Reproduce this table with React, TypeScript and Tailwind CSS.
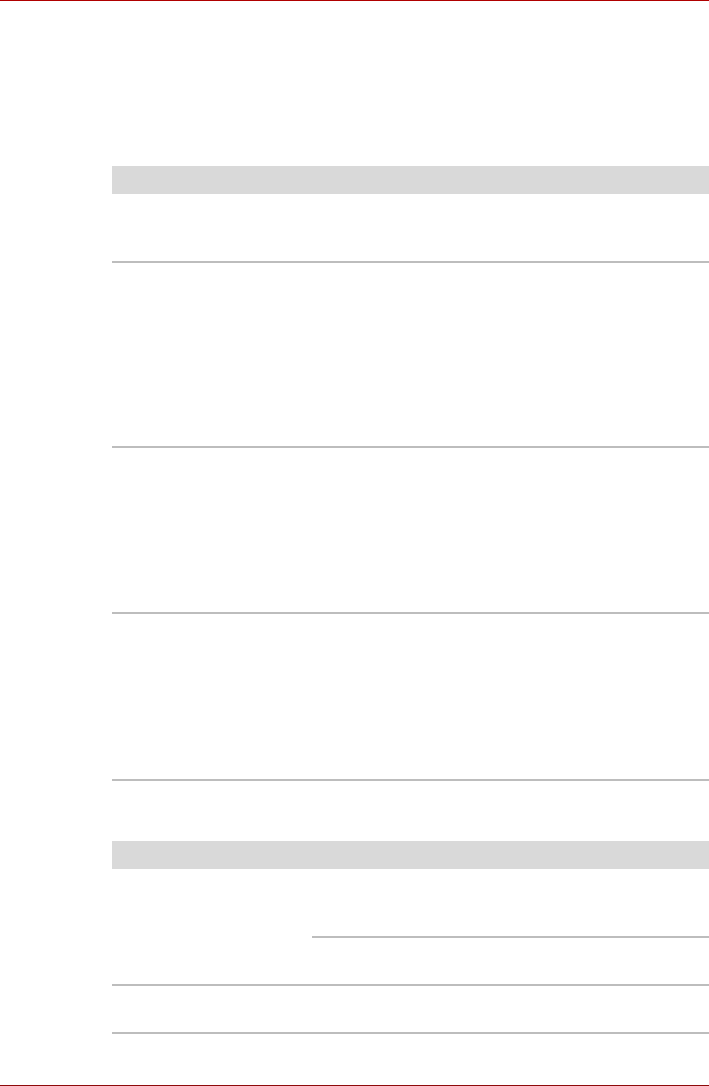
export default function App() {
  return (
    <div className="flex h-[1086px] w-[709px] flex-col bg-white">
      {/* Top rule */}
      <div className="h-px w-full bg-[#b00000]" />

      <div className="flex flex-col pl-[112px]">
        {/* First table */}
        <div className="mt-[165px] flex flex-col">
          <div className="h-[28px] bg-[#d9d9d9]" />
          <div className="h-[69px] border-b-2 border-[#bdbdbd]" />
          <div className="h-[185px] border-b-2 border-[#bdbdbd]" />
          <div className="h-[166px] border-b-2 border-[#bdbdbd]" />
          <div className="h-[167px] border-b-2 border-[#bdbdbd]" />
        </div>

        {/* Second table */}
        <div className="mt-[60px] flex flex-col">
          <div className="h-[28px] bg-[#d9d9d9]" />
          <div className="flex border-b-2 border-[#bdbdbd]">
            <div className="w-[200px]" />
            <div className="flex flex-1 flex-col">
              <div className="h-[69px] border-b-2 border-[#bdbdbd]" />
              <div className="h-[46px]" />
            </div>
          </div>
          <div className="h-[48px] border-b-2 border-[#bdbdbd]" />
        </div>
      </div>

      {/* Bottom rule */}
      <div className="mt-auto mb-0 h-px w-full bg-[#8e0b0b]" />
    </div>
  );
}
